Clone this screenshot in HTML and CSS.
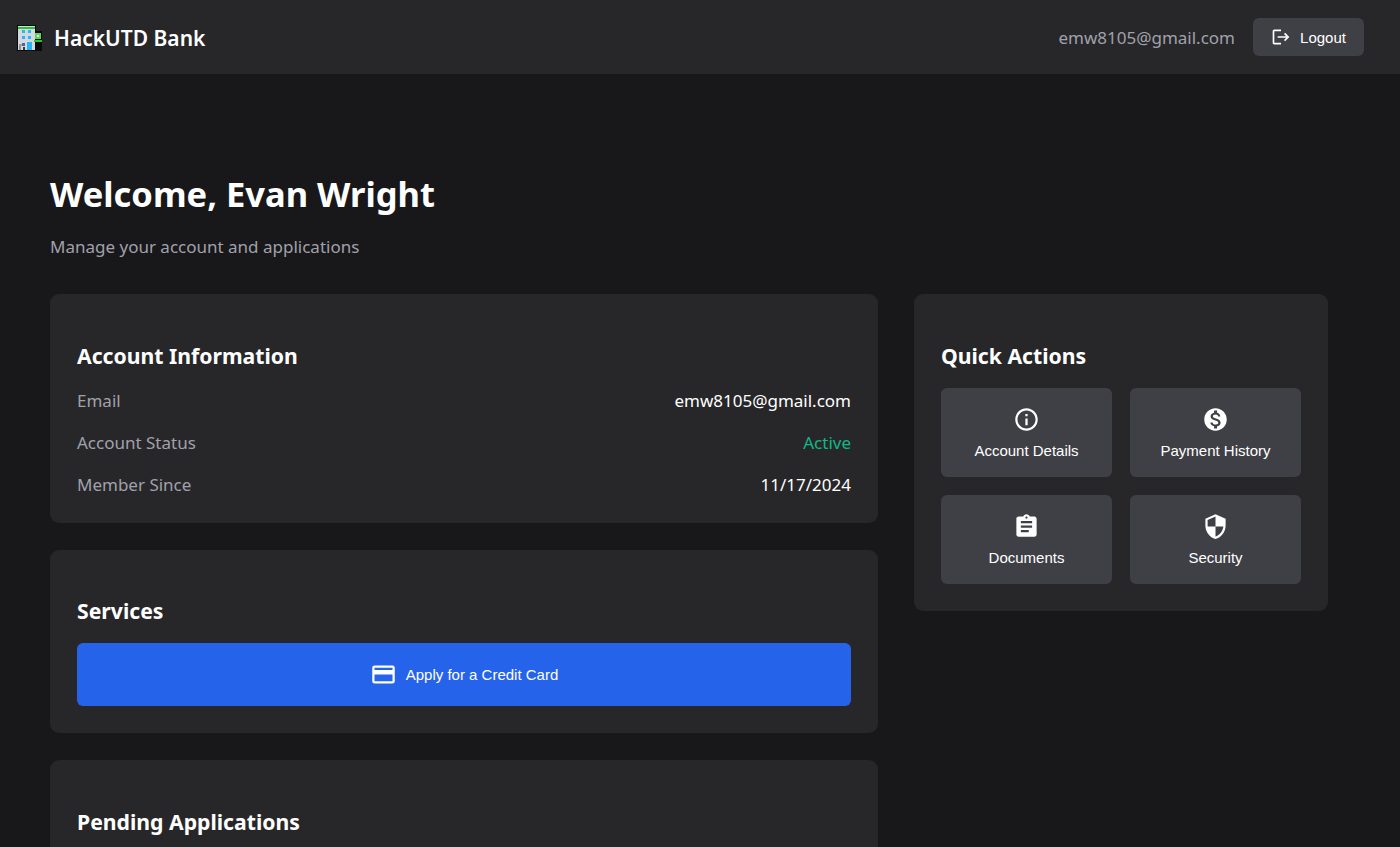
FILE: index.html
```html
<!DOCTYPE html>
<html lang="en">
<head>
<meta charset="utf-8">
<title>HackUTD Bank</title>
<link rel="stylesheet" href="styles.css">
</head>
<body>
<header class="topbar">
  <div class="brand">
    <svg class="logo" viewBox="0 0 25 26" aria-hidden="true">
      <rect x="0" y="0" width="19" height="26" fill="#0a0a0a"/>
      <rect x="17" y="6" width="8" height="20" fill="#0a0a0a"/>
      <rect x="1" y="1" width="17" height="24" fill="#d3d9dd"/>
      <rect x="1" y="2" width="17" height="2" fill="#22c52e"/>
      <rect x="5" y="5" width="3" height="3" fill="#29b6f6"/>
      <rect x="11" y="5" width="3" height="3" fill="#29b6f6"/>
      <rect x="5" y="11" width="3" height="3" fill="#29b6f6"/>
      <rect x="11" y="11" width="3" height="3" fill="#29b6f6"/>
      <rect x="10" y="17" width="5" height="8" fill="#29b6f6"/>
      <rect x="5" y="18" width="3" height="3" fill="#5c5f9c"/>
      <rect x="2" y="19" width="3" height="2" fill="#9aa0a4"/>
      <rect x="2" y="21" width="2" height="4" fill="#8d9296"/>
      <rect x="6" y="22" width="2" height="3" fill="#3a3a3a"/>
      <rect x="18" y="8" width="6" height="6" fill="#5fd35f"/>
      <rect x="20" y="10" width="2" height="2" fill="#e8f5e9"/>
      <rect x="17" y="15" width="8" height="2" fill="#22c52e"/>
    </svg>
    <span class="brand-name">HackUTD Bank</span>
  </div>
  <div class="top-actions">
    <span class="top-email">emw8105@gmail.com</span>
    <button class="logout">
      <svg class="logout-icon" viewBox="0 0 24 24" aria-hidden="true"><path d="M17 7l-1.41 1.41L18.17 11H8v2h10.17l-2.58 2.58L17 17l5-5zM4 5h8V3H4c-1.1 0-2 .9-2 2v14c0 1.1.9 2 2 2h8v-2H4V5z"/></svg>
      <span>Logout</span>
    </button>
  </div>
</header>
<main class="page">
  <h1 class="welcome">Welcome, Evan Wright</h1>
  <p class="subtitle">Manage your account and applications</p>
  <div class="layout">
    <div class="col-main">
      <section class="card">
        <h2 class="card-title">Account Information</h2>
        <dl class="info">
          <div class="info-row"><dt>Email</dt><dd>emw8105@gmail.com</dd></div>
          <div class="info-row"><dt>Account Status</dt><dd class="active">Active</dd></div>
          <div class="info-row"><dt>Member Since</dt><dd>11/17/2024</dd></div>
        </dl>
      </section>
      <section class="card">
        <h2 class="card-title">Services</h2>
        <button class="apply">
          <svg class="icon" viewBox="0 0 24 24" aria-hidden="true"><path d="M20 4H4c-1.11 0-1.99.89-1.99 2L2 18c0 1.11.89 2 2 2h16c1.11 0 2-.89 2-2V6c0-1.11-.89-2-2-2zm0 14H4v-6h16v6zm0-10H4V6h16v2z"/></svg>
          <span>Apply for a Credit Card</span>
        </button>
      </section>
      <section class="card">
        <h2 class="card-title">Pending Applications</h2>
      </section>
    </div>
    <aside class="col-side">
      <section class="card">
        <h2 class="card-title">Quick Actions</h2>
        <div class="actions">
          <button class="action">
            <svg class="icon" viewBox="0 0 24 24" aria-hidden="true"><path d="M11 7h2v2h-2zm0 4h2v6h-2zm1-9C6.48 2 2 6.48 2 12s4.48 10 10 10 10-4.48 10-10S17.52 2 12 2zm0 18c-4.41 0-8-3.59-8-8s3.59-8 8-8 8 3.59 8 8-3.59 8-8 8z"/></svg>
            <span>Account Details</span>
          </button>
          <button class="action">
            <svg class="icon" viewBox="0 0 24 24" aria-hidden="true"><path d="M12 2C6.48 2 2 6.48 2 12s4.48 10 10 10 10-4.48 10-10S17.52 2 12 2zm1.41 16.09V20h-2.67v-1.93c-1.71-.36-3.16-1.46-3.27-3.4h1.96c.1 1.05.82 1.87 2.65 1.87 1.96 0 2.4-.98 2.4-1.59 0-.83-.44-1.61-2.67-2.14-2.48-.6-4.18-1.62-4.18-3.67 0-1.72 1.39-2.84 3.11-3.21V4h2.67v1.95c1.86.45 2.79 1.86 2.85 3.39H14.3c-.05-1.11-.64-1.87-2.22-1.87-1.5 0-2.4.68-2.4 1.64 0 .84.65 1.39 2.67 1.91s4.18 1.39 4.18 3.91c-.01 1.83-1.38 2.83-3.12 3.16z"/></svg>
            <span>Payment History</span>
          </button>
          <button class="action">
            <svg class="icon" viewBox="0 0 24 24" aria-hidden="true"><path d="M19 3h-4.18C14.4 1.84 13.3 1 12 1c-1.3 0-2.4.84-2.82 2H5c-1.1 0-2 .9-2 2v14c0 1.1.9 2 2 2h14c1.1 0 2-.9 2-2V5c0-1.1-.9-2-2-2zm-7 0c.55 0 1 .45 1 1s-.45 1-1 1-1-.45-1-1 .45-1 1-1zm2 14H7v-2h7v2zm3-4H7v-2h10v2zm0-4H7V7h10v2z"/></svg>
            <span>Documents</span>
          </button>
          <button class="action">
            <svg class="icon" viewBox="0 0 24 24" aria-hidden="true"><path d="M12 1L3 5v6c0 5.55 3.84 10.74 9 12 5.16-1.26 9-6.45 9-12V5l-9-4zm0 10.99h7c-.53 4.12-3.28 7.79-7 8.94V12H5V6.3l7-3.11v8.8z"/></svg>
            <span>Security</span>
          </button>
        </div>
      </section>
    </aside>
  </div>
</main>
</body>
</html>
```
FILE: styles.css
```css
* { box-sizing: border-box; }
html, body { margin: 0; height: 847px; overflow: hidden; }
body {
  background: #18181b;
  color: #fff;
  font-family: "Noto Sans", "Open Sans", sans-serif;
}
button { font-family: "Liberation Sans", Arial, sans-serif; color: #fff; border: 0; }
.topbar {
  height: 74px;
  background: #27272a;
  display: flex;
  align-items: center;
  justify-content: space-between;
  padding: 0 36px 0 17px;
}
.brand { display: flex; align-items: center; gap: 12px; padding-top: 1px; }
.logo { width: 25px; height: 26px; display: block; }
.brand-name { font-size: 21px; font-weight: 600; }
.top-actions { display: flex; align-items: center; gap: 18px; }
.top-email { font-size: 17px; color: #a1a1aa; }
.logout {
  width: 111px;
  height: 38px;
  background: #3f3f46;
  border-radius: 6px;
  display: flex;
  align-items: center;
  justify-content: center;
  gap: 9px;
  font-size: 15px;
}
.logout-icon { width: 20px; height: 20px; fill: #fff; display: block; }
.page { padding: 99px 72px 0 50px; }
.welcome { margin: 0; font-size: 34.5px; line-height: 42px; font-weight: 700; }
.subtitle { margin: 20px 0 0; font-size: 17px; line-height: 24px; color: #a1a1aa; }
.layout {
  display: grid;
  grid-template-columns: 2fr 1fr;
  gap: 36px;
  margin-top: 35px;
  align-items: start;
}
.col-main { display: flex; flex-direction: column; gap: 27px; }
.card { background: #27272a; border-radius: 9px; padding: 44.6px 27px 27px; }
.card-title { margin: 0 0 15px; font-size: 21.2px; line-height: 34px; font-weight: 700; }
.info { margin: 0; padding-top: 1px; display: flex; flex-direction: column; gap: 18px; }
.info-row { display: flex; justify-content: space-between; font-size: 17px; line-height: 24px; }
.info-row dt { color: #a1a1aa; }
.info-row dd { margin: 0; }
.info-row .active { color: #10b981; }
.info-row:last-child { margin-bottom: -1px; }
.apply {
  width: 100%;
  height: 63px;
  background: #2563eb;
  border-radius: 6px;
  display: flex;
  align-items: center;
  justify-content: center;
  gap: 9px;
  font-size: 15px;
}
.icon { width: 27px; height: 27px; fill: #fff; display: block; }
.actions { display: grid; grid-template-columns: 1fr 1fr; gap: 18px; }
.action {
  height: 89px;
  background: #3f3f46;
  border-radius: 6px;
  display: flex;
  flex-direction: column;
  align-items: center;
  padding: 18px 0 0;
  gap: 9px;
  font-size: 15px;
  line-height: 18px;
}
```
